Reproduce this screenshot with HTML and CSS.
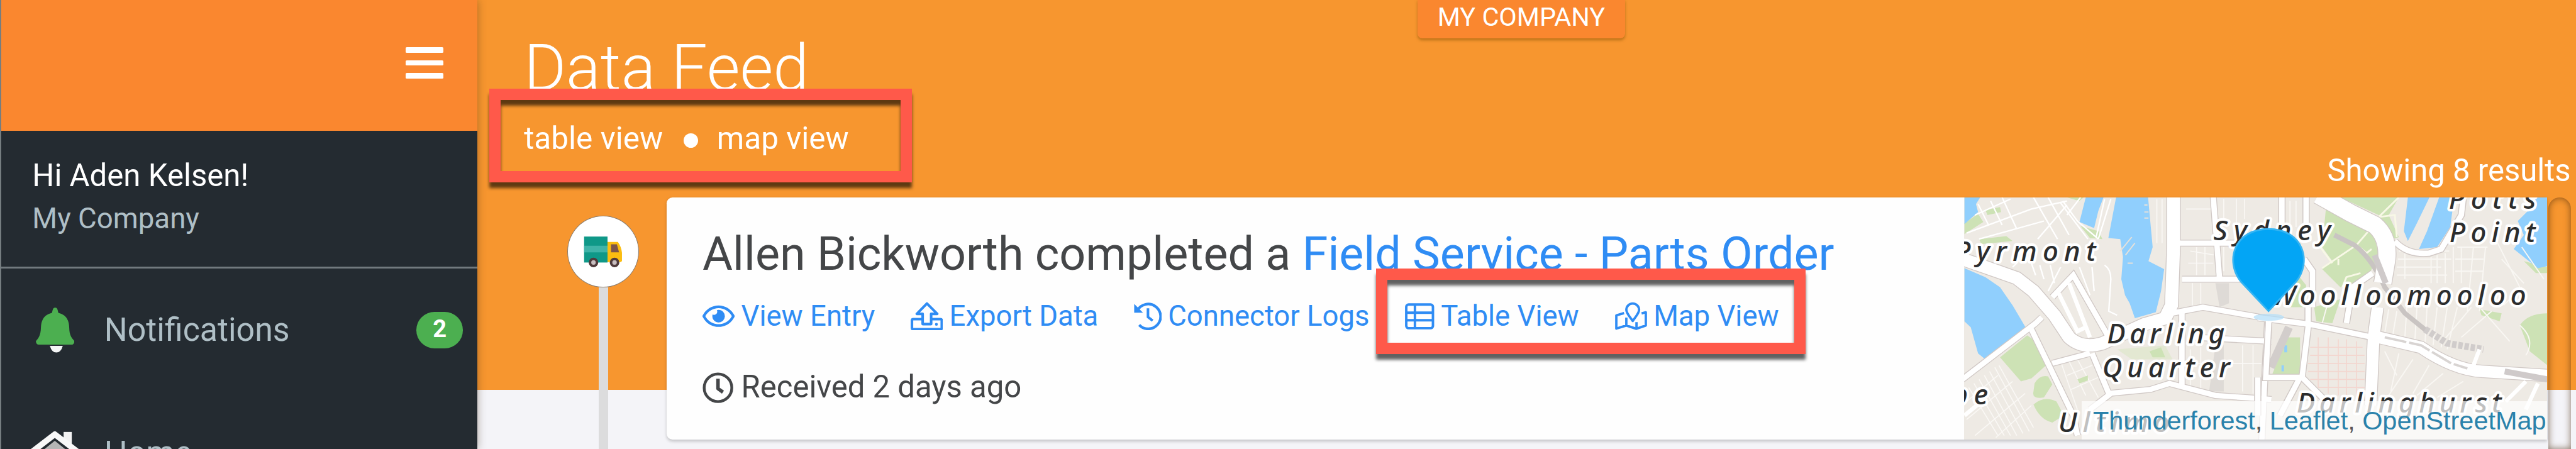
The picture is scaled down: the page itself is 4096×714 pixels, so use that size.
FILE: index.html
```html
<!DOCTYPE html>
<html lang="en">
<head>
<meta charset="utf-8">
<title>Data Feed</title>
<link rel="stylesheet" href="styles.css">
</head>
<body>
<div class="app">
  <aside class="sidebar">
    <div class="sidebar-top">
      <div class="burger"><span></span><span></span><span></span></div>
    </div>
    <div class="user">
      <div class="user-name">Hi Aden Kelsen!</div>
      <div class="user-company">My Company</div>
    </div>
    <nav class="nav">
      <a class="nav-item">
        <span class="nav-icon"><svg class="bell" viewBox="187 68 198 230"><path fill="#4caf50" d="M187 240C200 225 212 212 213 170C214 130 232 104 268 96C274 90 270 68 286 68C302 68 298 90 304 96C340 104 357 130 358 170C359 212 370 222 385 240Q382 258 370 258H202Q189 258 187 240Z"/><path fill="#f4f6f6" d="M259 264H325Q316 298 292 298Q268 298 259 264Z"/></svg></span>
        <span class="nav-label">Notifications</span>
        <span class="badge">2</span>
      </a>
      <a class="nav-item">
        <span class="nav-icon"><svg class="house" viewBox="0 0 82 76"><path fill="#f3f3f3" d="M56 2h14v28H56z"/><path fill="#b5b5b5" d="M41 14L68 36V74H14V36Z"/><path fill="none" stroke="#242b31" stroke-width="5" d="M6 42L41 14L76 42"/><path fill="none" stroke="#f8f8f8" stroke-width="10" stroke-linejoin="round" d="M2 36L41 6L80 36"/></svg></span>
        <span class="nav-label">Home</span>
      </a>
    </nav>
  </aside>

  <main class="main">
    <div class="tag">MY COMPANY</div>
    <header class="head">
      <div>
        <h1 class="title">Data Feed</h1>
        <div class="views"><a>table view</a><span class="dot"></span><a>map view</a></div>
      </div>
      <div class="results">Showing 8 results</div>
    </header>
    <div class="callout callout-views"></div>

    <section class="feed">
      <div class="timeline">
        <div class="node">
          <svg class="truck" viewBox="110 155 200 168"><rect x="112" y="162" width="120" height="133" fill="#0f9888"/><rect x="112" y="209" width="120" height="34" fill="#3fb3a8"/><path fill="#fbbd10" d="M232 190H285Q303 215 306 245V285Q306 293 298 293H232Z"/><path fill="#7d5548" d="M250 202H280L291 243H250Z"/><g fill="#c9bfc0" stroke="#4f3b3c" stroke-width="13"><circle cx="160" cy="295" r="18"/><circle cx="268" cy="295" r="18"/></g></svg>
        </div>
        <div class="stem"></div>
      </div>

      <article class="card">
        <div class="card-body">
          <h2 class="entry">Allen Bickworth completed a <a>Field Service - Parts Order</a></h2>
          <div class="links">
            <a class="link"><svg class="i55" viewBox="0 0 576 512"><path fill="currentColor" d="M288 144a110.94 110.94 0 0 0-31.24 5 55.4 55.4 0 0 1 7.24 27 56 56 0 0 1-56 56 55.4 55.4 0 0 1-27-7.24A111.71 111.71 0 1 0 288 144zm284.52 97.4C518.29 135.59 410.93 64 288 64S57.68 135.64 3.48 241.41a32.35 32.35 0 0 0 0 29.19C57.71 376.41 165.07 448 288 448s230.32-71.64 284.52-177.41a32.35 32.35 0 0 0 0-29.19zM288 400c-98.65 0-189.09-55-237.93-144C98.91 167 189.34 112 288 112s189.09 55 237.93 144C477.1 345 386.66 400 288 400z"/></svg>View Entry</a>
            <a class="link"><svg class="i55" viewBox="0 0 55 49"><g fill="none" stroke="currentColor" stroke-width="4.4" stroke-linejoin="round"><path d="M20.5 29.5H4.5Q2.2 29.5 2.2 32V44.5Q2.2 46.8 4.5 46.8H51Q53.2 46.8 53.2 44.5V32Q53.2 29.5 51 29.5H35"/><path d="M27.8 2.8L10.5 20.5H20.5V38H35V20.5H45.5Z"/></g><circle cx="44" cy="38.3" r="2.4" fill="currentColor"/></svg>Export Data</a>
            <a class="link"><svg class="i47" viewBox="0 0 47 49"><path fill="none" stroke="currentColor" stroke-width="4.6" d="M6 14.5A21.2 21.2 0 1 1 9 39.5"/><path fill="none" stroke="currentColor" stroke-width="4.4" stroke-linejoin="round" d="M24 11V26L32 32"/><path fill="currentColor" d="M.5 3.5V18.5H15.5Z"/></svg>Connector Logs</a>
            <a class="link"><svg class="i50" viewBox="0 0 50 49"><g fill="none" stroke="currentColor" stroke-width="4.2"><rect x="2.2" y="4.5" width="45.6" height="40.5" rx="4"/><path d="M17 4.5V45M2 18.5H48M2 31.5H48"/></g></svg>Table View</a>
            <a class="link"><svg class="i55" viewBox="0 0 57 49"><g fill="none" stroke="currentColor" stroke-width="4.2" stroke-linejoin="round"><path d="M31.3 33C27 26.5 20 19.5 20 13.4A11.3 11.3 0 0 1 42.6 13.4C42.6 19.5 35.6 26.5 31.3 33Z"/><path d="M16 19L2.3 23V46.5L20 41L38 46.8L54.5 41V17.5L47 19.5M20 27V41M38 35V46.5"/></g></svg>Map View</a>
          </div>
          <div class="received"><svg class="i53" viewBox="0 0 53 53"><circle cx="26.5" cy="26.5" r="23.6" fill="none" stroke="currentColor" stroke-width="4.8"/><path fill="none" stroke="currentColor" stroke-width="6" stroke-linejoin="round" d="M26.5 11V28L35 34"/></svg>Received 2 days ago</div>
          <div class="callout callout-links"></div>
        </div>

        <div class="map">
          <svg class="map-art" viewBox="3355 337 996 414" preserveAspectRatio="none">
            <rect x="3355" y="337" width="996" height="414" fill="#eeeae4"/>
            <!-- western half -->
            <g transform="translate(3320 230) scale(.35714 .34247)">
              <g fill="#cde2b5">
                <path d="M100 440L165 395L190 435L100 495ZM170 520L300 505L330 530L180 545ZM655 455L740 480L760 520L700 515ZM590 312H670L650 330ZM200 375L270 360L275 385L210 400Z"/>
                <path d="M830 1070L1060 1050L1095 1120L900 1120Z" fill="#e3e8d2"/>
              </g>
              <g fill="#90cffd">
                <path d="M100 312H175L155 345L165 385L100 445Z"/><path d="M680 312H765L740 380L720 465L650 435Z"/>
                <path d="M825 312H978L1000 560L980 630L1055 670L1040 780L1015 885L915 915L890 840L868 800L850 720L858 610L845 520L788 515Z"/>
                <path d="M100 665L200 710L270 760L330 850L392 960L200 1120L165 1090L130 960L100 930Z"/>
              </g>
              <g stroke="#e6e1da" stroke-width="6" fill="none"><path d="M960 350H975M960 385H980M960 415H980M845 580L900 510M870 600L915 540M880 640H905"/></g>
              <g stroke="#fff" stroke-width="7" fill="none">
                <path d="M165 345L215 450M225 330L280 450M280 312L350 470M430 312L545 520M500 312L600 500M560 340L690 520M655 312L590 400M150 400L320 320M110 490L420 370L590 330M170 520L480 430M450 520L590 350M770 320L730 510M800 320L740 520M570 330L640 430L740 520"/>
                <path d="M330 660L350 640M420 640L440 700M460 650L480 720M510 650L530 740M560 660L500 780M650 660L700 800M710 660L720 780M770 650Q800 670 800 720L790 880L830 900"/>
              </g>
              <g stroke="#faf8f5" stroke-width="5" fill="none">
                <path d="M120 1260L260 1500M145 1240L290 1500M170 1220L320 1500M195 1200L350 1500M220 1180L380 1490M245 1160L410 1480M265 1150L430 1460M110 1330L260 1200M110 1420L330 1230M150 1500L390 1290M250 1510L420 1350M600 1130L680 1300M640 1120L740 1310M590 1200L710 1150M610 1270L740 1210M560 1130L640 1370"/>
                <path d="M1020 320V540M1045 320V540M1180 580L1300 600M1170 640H1290M1210 560V700M1250 560V700M1190 740V850M1230 740V850M1160 370H1290M1340 320V420M1400 320V440M1440 320V420M1180 1070V1260M1230 1060V1270M1430 1050V1280M1480 1050V1290M1200 1140H1520M1340 560V680"/>
              </g>
              <g fill="#cde2b5"><path d="M270 1110L400 1000L440 1030L490 1150L420 1215L370 1230Z"/><path d="M435 1240Q460 1195 500 1205L520 1245L480 1310Q420 1320 430 1280ZM430 1345Q480 1300 540 1330L575 1400L520 1435Q460 1420 430 1345ZM640 1220L690 1200V1225L650 1240ZM985 1080L1040 1060L1060 1110H1000Z"/></g>
              <path fill="#dedad6" d="M1300 1050H1340V1280H1270ZM1300 740H1365V840L1320 860Z"/>
              <g stroke="#d0c8c5" fill="none">
                <path stroke-width="70" d="M90 620L200 660L350 715L430 780L530 900L600 1010Q660 1070 760 1040L960 945L1060 915L1090 850L1100 560V312"/>
                <path stroke-width="34" d="M90 1220L440 940L470 910M420 970L490 1120L620 1400L640 1500M520 1140L700 1090M520 810L620 700L790 1010M710 1090L790 1290L990 1270L1080 1240L1300 1300L1568 1320M700 1370L800 1290M1100 540L1440 540M1290 312L1320 720M1140 720H1568M1090 890L1240 860L1568 920M1140 880V1250M1200 1010L1568 1030M1550 920L1520 1568"/>
              </g>
              <g stroke="#fff" fill="none">
                <path stroke-width="62" d="M90 620L200 660L350 715L430 780L530 900L600 1010Q660 1070 760 1040L960 945L1060 915L1090 850L1100 560V312"/>
                <path stroke-width="26" d="M90 1220L440 940L470 910M420 970L490 1120L620 1400L640 1500M520 1140L700 1090M520 810L620 700L790 1010M710 1090L790 1290L990 1270L1080 1240L1300 1300L1568 1320M700 1370L800 1290M1100 540L1440 540M1290 312L1320 720M1140 720H1568M1090 890L1240 860L1568 920M1140 880V1250M1200 1010L1568 1030M1550 920L1520 1568"/>
                <path stroke-width="20" d="M550 790L640 980L680 960M600 740L700 1010M100 1400L170 1340L160 1300"/>
              </g>
            </g>
            <!-- eastern half -->
            <g transform="translate(3860 230) scale(.34435 .34247)">
              <g fill="#cde2b5">
                <path d="M330 350L560 470L590 600L530 720L400 760L310 670L360 630L310 560Z"/><path d="M400 312H690L640 400L690 510L660 520L590 400Z"/><path d="M190 700L230 750V860H120ZM270 860L400 820L360 940L280 930Z"/><path d="M130 1010H200V1200H60L100 1100Z"/><path d="M1290 950Q1330 890 1427 890V1150L1340 1080ZM1310 630L1427 660V690L1370 690ZM1090 870L1200 890L1190 930L1100 900Z"/>
              </g>
              <g fill="#90cffd"><path d="M735 312H842L780 440L735 530L715 480ZM890 312H965L945 460L880 560L790 570L830 480Z"/><path d="M1427 312V655L1380 665L1260 570L1310 500L1280 430L1340 370L1370 312Z"/><path d="M122 1050H136V1085H122ZM108 1150H120V1180H108Z"/></g>
              <g stroke="#f9f7f3" stroke-width="6" fill="none">
                <path d="M690 580H940M685 620H950M680 660H900M680 700H930M720 560V720M850 610V740M880 600V740M920 590V740M960 560V740M1000 560V740M1060 560L1030 880M1120 560L1090 880M980 560H1130M970 620H1110M970 680H1110M1180 540L1290 760M1200 620L1310 740M1300 560L1410 720"/>
                <path d="M640 870L620 990M680 880L660 1000M730 860L720 1010M780 860L770 1020M830 860L820 1040M880 860L860 1050M930 860L900 1060M980 860L930 1070M1050 860L900 1040M1150 880L1000 1010M1290 950Q1370 1020 1320 1100M1210 850L1300 760M1100 870L1240 1030M620 1080L680 1200M690 1090L650 1280M760 1120L640 1300M840 1150L760 1290M910 1190L780 1300M1010 1230L880 1310M150 330V460M180 330V460M340 830L310 940"/>
              </g>
              <g stroke="#f3d6cf" stroke-width="5" fill="none"><path d="M250 1060H510M250 1100H520M240 1140H520M240 1180H520M250 1220H520M290 1260H520M290 1010V1260M340 1010V1290M390 1020V1300M430 1020V1300M480 1030V1310"/></g>
              <g stroke="#f8f8e6" stroke-width="9" fill="none"><path d="M310 665L480 550L540 480M690 312L590 410L670 400L680 510M390 650V620M480 550L530 590L555 570M410 760L430 710L500 690M300 560L360 640"/></g>
              <g fill="none"><path stroke="#c9c4c2" stroke-width="24" d="M370 500L470 550Q560 620 620 760L720 890L830 980"/><path stroke="#d0cccb" stroke-width="34" stroke-dasharray="22 9" d="M820 970L930 1040L1110 1070"/><path stroke="#d2cdcb" stroke-width="40" d="M145 960L55 1160"/></g>
              <g stroke="#d0c8c5" fill="none">
                <path stroke-width="94" d="M290 300L450 390L570 450Q640 510 630 620L610 740"/>
                <path stroke-width="66" d="M585 860L565 1010L550 1350M590 1010L800 1060Q960 1170 1100 1180L1427 1200"/>
                <path stroke-width="36" d="M-10 912L250 945L560 1010M230 312V460M240 860V960L210 1210L320 1320M110 312V440M45 920L30 1210L200 1210L100 1400M-10 1210V1400M670 530Q730 600 840 590L900 570L1000 400L1010 312M220 620L262 680V860M430 940L460 760L560 690"/>
              </g>
              <g stroke="#fff" fill="none">
                <path stroke-width="86" d="M290 300L450 390L570 450Q640 510 630 620L610 740"/>
                <path stroke-width="58" d="M585 860L565 1010L550 1350M590 1010L800 1060Q960 1170 1100 1180L1427 1200"/>
                <path stroke-width="27" d="M-10 912L250 945L560 1010M230 312V460M240 860V960L210 1210L320 1320M110 312V440M45 920L30 1210L200 1210L100 1400M-10 1210V1400M670 530Q730 600 840 590L900 570L1000 400L1010 312M220 620L262 680V860M430 940L460 760L560 690"/>
                <path stroke-width="20" d="M1060 1150L1090 1070M1320 1230L1220 1330M1380 1240L1320 1370"/>
              </g>
              <path fill="none" stroke="#cfcaca" stroke-width="30" d="M1215 1180L1427 1220M570 600L625 740"/>
              <path fill="none" stroke="#d8d4d2" stroke-width="12" stroke-dasharray="110 14" d="M620 1010L800 1050L950 1140L1030 1165"/>
              <ellipse cx="45" cy="910" rx="75" ry="18" fill="#b6dff8" opacity=".75"/>
            </g>
            <g class="places">
              <text x="3339" y="445" textLength="241">Pyrmont</text>
              <text x="3781" y="410" textLength="200">Sydney</text>
              <text x="3599" y="586" textLength="201">Darling</text>
              <text x="3591" y="644" textLength="218">Quarter</text>
              <text x="3334" y="690" textLength="62">be</text>
              <text x="3516" y="738" textLength="190">Ultimo</text>
              <text x="4183" y="356" textLength="149">Potts</text>
              <text x="4184" y="413" textLength="147">Point</text>
              <text x="3880" y="521" textLength="435">Woolloomooloo</text>
              <text x="3923" y="704" textLength="350">Darlinghurst</text>
            </g>
            <path fill="#03a5f5" stroke="#35b4f3" stroke-width="3" d="M3875 531L3828 481C3800 446 3816 391 3875 391C3934 391 3950 446 3922 481Z"/>
          </svg>
          <div class="credit"><a>Thunderforest</a>, <a>Leaflet</a>, <a>OpenStreetMap</a></div>
        </div>
      </article>

      <div class="scroll"></div>
    </section>
  </main>
</div>
</body>
</html>
```
FILE: styles.css
```css
/* 1rem is ten design pixels */
html { font-size: 9.309px; }
* { box-sizing: border-box; }
body {
  margin: 0;
  overflow: hidden;
  font-family: Roboto, "Liberation Sans", sans-serif;
  color: #444648;
}
h1, h2 { margin: 0; font-weight: 400; }
svg { display: block; flex: none; }

.app { display: flex; width: 4096px; height: 714px; overflow: hidden; }

.sidebar {
  position: relative;
  z-index: 1;
  flex: none;
  width: 81.5rem;
  display: flex;
  flex-direction: column;
  background: #242b31;
  border-left: .3rem solid #757d80;
  box-shadow: 0 0 1.4rem rgba(60, 40, 20, .4);
}
.sidebar-top {
  flex: none;
  height: 22.3rem;
  padding: 8.1rem 5.8rem 0 0;
  display: flex;
  justify-content: flex-end;
  background: #fa872f;
}
.burger { display: flex; flex-direction: column; gap: 1.3rem; }
.burger span { width: 6.4rem; height: .9rem; border-radius: .2rem; background: #fff; }
.user {
  flex: none;
  height: 23.6rem;
  padding: 4.2rem 5rem 0 5.3rem;
  border-bottom: .4rem solid #727a7f;
}
.user-name { font-size: 5.28rem; line-height: 7rem; color: #fff; }
.user-company { margin-top: .3rem; font-size: 4.9rem; line-height: 7rem; color: #afbfc6; }
.nav-item { display: flex; align-items: center; height: 21rem; padding: 0 2.4rem 0 4.7rem; }
.nav-icon { width: 9rem; display: flex; justify-content: center; margin-right: 3.9rem; }
.bell { width: 6.6rem; height: 7.7rem; }
.house { width: 8.2rem; height: 7.6rem; }
.nav-label { flex: 1; font-size: 5.57rem; line-height: 7rem; color: #afbfc6; }
.badge {
  width: 8rem;
  height: 6.2rem;
  border-radius: 3.1rem;
  background: #4caf50;
  color: #fff;
  font-size: 4.1rem;
  font-weight: 700;
  line-height: 6rem;
  text-align: center;
}

.main {
  position: relative;
  flex: 1;
  display: flex;
  flex-direction: column;
  background: linear-gradient(#f7962f 66.6rem, #f4f4f8 66.6rem);
}
.tag {
  position: absolute;
  top: 0;
  left: 160.6rem;
  width: 35.5rem;
  height: 6.6rem;
  border-radius: 0 0 .8rem .8rem;
  background: #fa872f;
  box-shadow: 0 .3rem .5rem rgba(130, 80, 0, .5);
  color: #fff;
  font-size: 4.45rem;
  line-height: 5.8rem;
  text-align: center;
}
.head {
  flex: none;
  height: 32.2rem;
  padding: 5.7rem .9rem 0 8rem;
  display: flex;
  justify-content: space-between;
  color: #fff;
}
.title { font-size: 10.97rem; line-height: 12rem; font-weight: 300; }
.views { display: flex; align-items: center; margin-top: 3rem; font-size: 5.32rem; line-height: 6rem; }
.dot { width: 2.5rem; height: 2.5rem; margin: .6rem 3.2rem 0 3.5rem; border-radius: 50%; background: #fff; }
.results { align-self: flex-end; font-size: 5.27rem; line-height: 6rem; }

.callout {
  position: absolute;
  border: 2rem solid #ff594a;
  filter: drop-shadow(0 1rem .3rem rgba(0, 0, 0, .62));
}
.callout-views { left: 2.1rem; top: 15.1rem; width: 72.2rem; height: 16.1rem; }
.callout-links { left: 121.1rem; top: 12.2rem; width: 73.4rem; height: 14.6rem; }

.feed { flex: 1; display: flex; margin-top: 1.5rem; }
.timeline {
  flex: none;
  width: 32.4rem;
  padding: 3.1rem 0 0 10.7rem;
  display: flex;
  flex-direction: column;
  align-items: center;
}
.node {
  flex: none;
  width: 12.2rem;
  height: 12.3rem;
  display: flex;
  align-items: center;
  justify-content: center;
  border: .2rem solid #8b7c6c;
  border-radius: 50%;
  background: #fff;
}
.truck { width: 6.7rem; height: 5.6rem; }
.stem { flex: 1; width: 1.6rem; background: #dcdcdd; }

.card {
  flex: none;
  width: 321.2rem;
  height: 41.4rem;
  display: flex;
  border-radius: 1rem 0 0 1rem;
  background: #fefefe;
  box-shadow: 0 .3rem .6rem rgba(0, 0, 0, .2);
}
.card-body { position: relative; flex: 1; padding: 5.2rem 0 0 6.1rem; }
.entry { font-size: 7.915rem; line-height: 9.1rem; white-space: nowrap; }
.entry a, .link { color: #2f8cf4; }
.links { display: flex; gap: 6.12rem; margin-top: 3rem; }
.link { display: flex; align-items: center; gap: 1.1rem; font-size: 4.885rem; line-height: 6rem; white-space: nowrap; }
.i55 { width: 5.5rem; height: 4.9rem; }
.i53 { width: 5.3rem; height: 5.3rem; }
.i50 { width: 5rem; height: 4.9rem; }
.i47 { width: 4.7rem; height: 4.9rem; }
.received { display: flex; align-items: center; gap: 1.3rem; margin-top: 6.2rem; font-size: 5.27rem; line-height: 6rem; }

.map { position: relative; flex: none; width: 99.6rem; height: 41.4rem; overflow: hidden; }
.map-art { width: 100%; height: 100%; }
.places text {
  font: italic 500 47px "Noto Sans", "Open Sans", sans-serif;
  fill: #2c2d2e;
  stroke: #fff;
  stroke-width: 9px;
  stroke-linejoin: round;
  paint-order: stroke;
}
.credit {
  position: absolute;
  right: 0;
  bottom: 0;
  width: 79.5rem;
  height: 6.6rem;
  padding-right: .2rem;
  background: rgba(255, 255, 255, .7);
  color: #555;
  font-family: "Liberation Sans", Arial, sans-serif;
  font-size: 4.45rem;
  line-height: 6.8rem;
  text-align: right;
  white-space: nowrap;
}
.credit a { color: #2a82ab; }

.scroll {
  width: 3.8rem;
  margin-left: .2rem;
  border-radius: 1.9rem 1.9rem 0 0;
  box-shadow: inset 0 0 1.2rem rgba(70, 40, 10, .65);
}
```
